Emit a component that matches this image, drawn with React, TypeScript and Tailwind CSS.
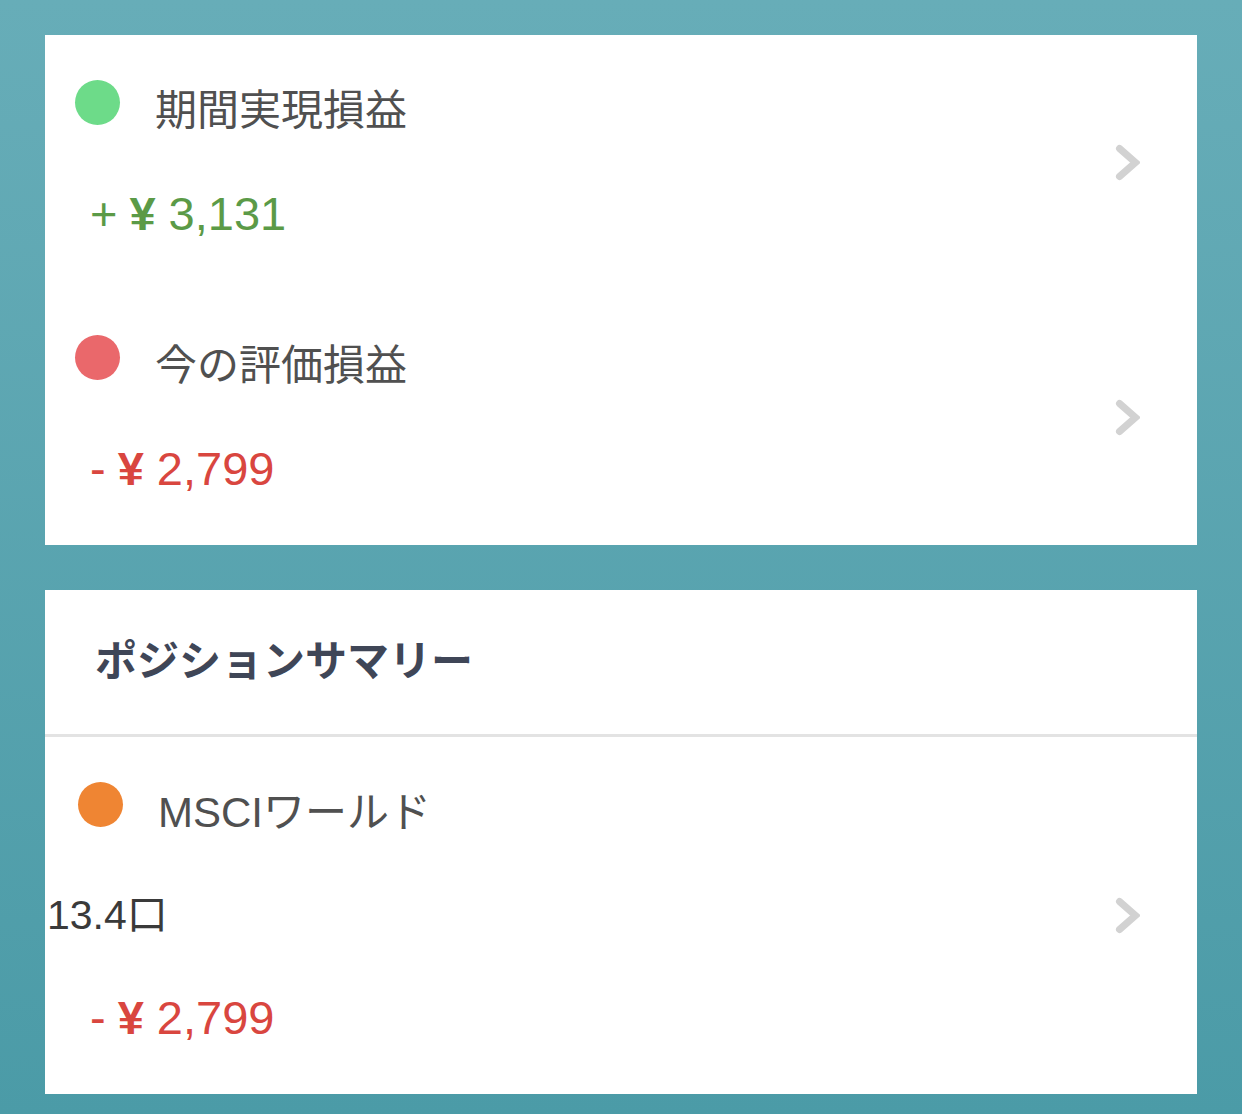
import { type ReactNode } from "react";

const latin = "font-['Liberation_Sans','Noto_Sans_CJK_JP',sans-serif]";

function Chevron() {
  return (
    <svg width="25" height="37" viewBox="0 0 25 37" className="shrink-0">
      <polyline
        points="4.5,4.5 20.5,18.5 4.5,32.5"
        fill="none"
        stroke="#d2d2d2"
        strokeWidth="7"
        strokeLinecap="round"
        strokeLinejoin="miter"
      />
    </svg>
  );
}

function Dot({ color }: { color: string }) {
  return <span className={`block h-[45px] w-[45px] shrink-0 rounded-full ${color}`} />;
}

function Amount({ sign, value, color }: { sign: string; value: string; color: string }) {
  return (
    <div className={`flex items-baseline text-[47px] leading-[52px] ${color}`}>
      <span>{sign}</span>
      <span className="ml-[12px] font-bold">¥</span>
      <span className="ml-[13px]">{value}</span>
    </div>
  );
}

function Header({ dot, label, indent }: { dot: string; label: string; indent: string }) {
  return (
    <div className={`flex items-start ${indent}`}>
      <Dot color={dot} />
      <span className="ml-[35px] mt-[8px] text-[42px] leading-[45px] text-[#505050]">{label}</span>
    </div>
  );
}

function Row({ children, height }: { children: ReactNode; height: string }) {
  return (
    <div className={`flex items-center justify-between pr-[57px] ${height}`}>
      <div className="flex h-full flex-col pt-[45px]">{children}</div>
      <Chevron />
    </div>
  );
}

export default function App() {
  return (
    <div
      className={`flex min-h-[1114px] flex-col gap-[45px] bg-gradient-to-b from-[#67adb8] to-[#4b9ba7] px-[45px] pb-[20px] pt-[35px] ${latin}`}
    >
      {/* 損益 */}
      <section className="bg-white">
        <Row height="h-[255px]">
          <Header dot="bg-[#6ddb89]" label="期間実現損益" indent="pl-[30px]" />
          <div className="mt-[55px] pl-[45px]">
            <Amount sign="+" value="3,131" color="text-[#5b9a47]" />
          </div>
        </Row>
        <Row height="h-[255px]">
          <Header dot="bg-[#ea686b]" label="今の評価損益" indent="pl-[30px]" />
          <div className="mt-[55px] pl-[45px]">
            <Amount sign="-" value="2,799" color="text-[#d9463f]" />
          </div>
        </Row>
      </section>

      {/* ポジションサマリー */}
      <section className="bg-white">
        <div className="flex h-[147px] items-center border-b-[3px] border-[#e3e3e3] pl-[50px]">
          <h2 className="text-[42px] font-bold leading-none text-[#3f4657]">ポジションサマリー</h2>
        </div>
        <Row height="h-[357px]">
          <Header dot="bg-[#ef8533]" label="MSCIワールド" indent="pl-[33px]" />
          <div className="mt-[56px] pl-[2px] text-[41px] leading-[48px] text-[#3a3a3a]">13.4口</div>
          <div className="mt-[53px] pl-[45px]">
            <Amount sign="-" value="2,799" color="text-[#d9463f]" />
          </div>
        </Row>
      </section>
    </div>
  );
}
